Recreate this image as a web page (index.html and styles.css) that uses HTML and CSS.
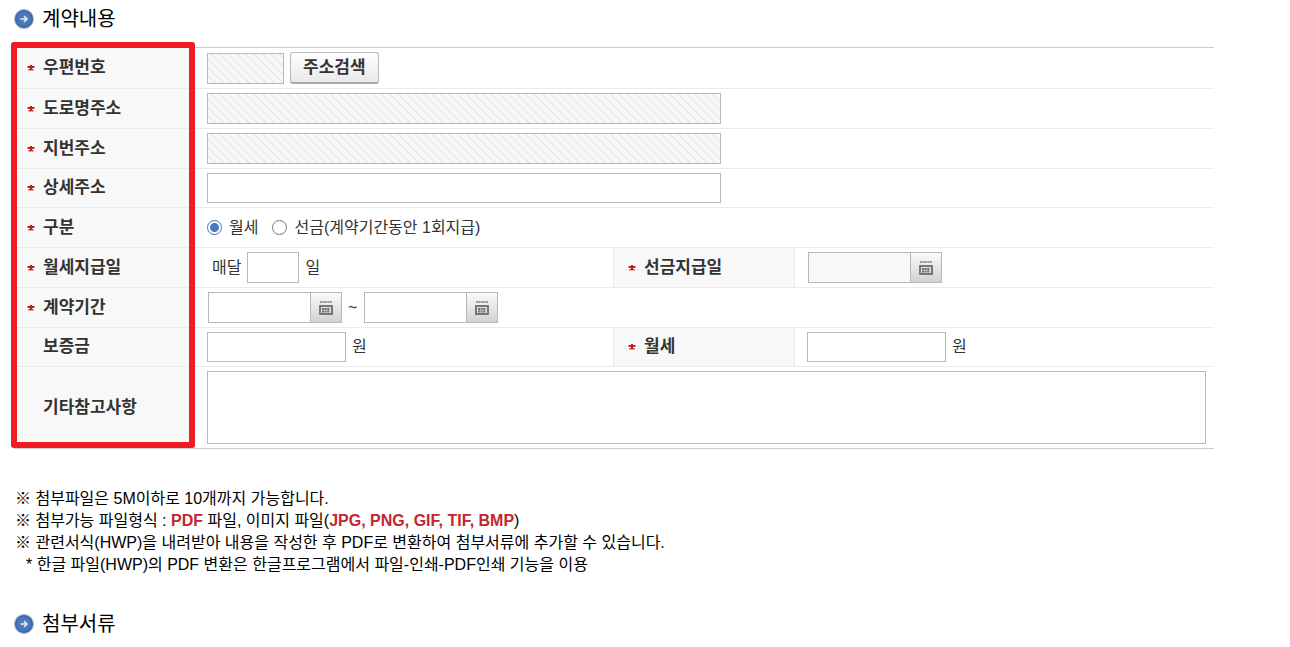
FILE: index.html
```
<!DOCTYPE html>
<html lang="ko">
<head>
<meta charset="utf-8">
<title>계약내용</title>
<link rel="stylesheet" href="styles.css">
</head>
<body>
<svg class="sprite" aria-hidden="true">
  <symbol id="arrow" viewBox="0 0 20 20">
    <circle cx="10" cy="10" r="9.5" fill="#4a78bb" stroke="#a9b9bd"/>
    <circle cx="10" cy="10" r="8" fill="none" stroke="#1f3c94" stroke-dasharray="1 1.2"/>
    <path d="M6.500 10h6M10 7l3 3-3 3" fill="none" stroke="#e8eef5" stroke-width="1.500"/>
  </symbol>
  <symbol id="star" viewBox="0 0 8 6">
    <path d="M0 2h8M1 5h6" stroke="#e3a9a4" stroke-width="2"/>
    <path d="M3 0h2v1h2v2H5v1h1v1H2V4h1V3H1V1h2z" fill="#bf1f1a"/>
  </symbol>
  <symbol id="calendar" viewBox="0 0 14 14">
    <path d="M1 1h12" stroke="#999" stroke-width="2" stroke-dasharray="2 .5"/>
    <path d="M1 5h12v8H1z" fill="#dde3e6" stroke="#777" stroke-width="2"/>
    <path d="M3 8h8M3 10.500h8" stroke="#66717b" stroke-width="2" stroke-dasharray="2 .6"/>
  </symbol>
</svg>
<main class="page">
  <h2 class="heading"><svg class="arrow"><use href="#arrow"/></svg>계약내용</h2>
  <form class="contract">
    <table class="grid">
      <colgroup><col class="col-label"><col class="col-wide"><col class="col-label2"><col></colgroup>
      <tr>
        <th scope="row"><label class="label" for="zip"><svg class="star"><use href="#star"/></svg>우편번호</label></th>
        <td colspan="3"><div class="line"><input class="field zip locked" id="zip" type="text" readonly><button class="search" type="button">주소검색</button></div></td>
      </tr>
      <tr>
        <th scope="row"><label class="label" for="road"><svg class="star"><use href="#star"/></svg>도로명주소</label></th>
        <td colspan="3"><div class="line"><input class="field address locked" id="road" type="text" readonly></div></td>
      </tr>
      <tr>
        <th scope="row"><label class="label" for="lot"><svg class="star"><use href="#star"/></svg>지번주소</label></th>
        <td colspan="3"><div class="line"><input class="field address locked" id="lot" type="text" readonly></div></td>
      </tr>
      <tr>
        <th scope="row"><label class="label" for="detail"><svg class="star"><use href="#star"/></svg>상세주소</label></th>
        <td colspan="3"><div class="line"><input class="field address short" id="detail" type="text"></div></td>
      </tr>
      <tr>
        <th scope="row"><span class="label"><svg class="star"><use href="#star"/></svg>구분</span></th>
        <td colspan="3"><div class="line choices">
          <label class="choice"><input class="radio" type="radio" name="kind" checked>월세</label>
          <label class="choice"><input class="radio" type="radio" name="kind">선금(계약기간동안 1회지급)</label>
        </div></td>
      </tr>
      <tr>
        <th scope="row"><label class="label" for="payday"><svg class="star"><use href="#star"/></svg>월세지급일</label></th>
        <td><div class="line monthly"><span>매달</span><input class="field day" id="payday" type="text"><span>일</span></div></td>
        <th class="inner" scope="row"><label class="label" for="prepay"><svg class="star"><use href="#star"/></svg>선금지급일</label></th>
        <td><div class="line"><span class="date"><input class="field date-text disabled" id="prepay" type="text" readonly><button class="picker" type="button" aria-label="날짜 선택"><svg class="calendar"><use href="#calendar"/></svg></button></span></div></td>
      </tr>
      <tr>
        <th scope="row"><label class="label" for="from"><svg class="star"><use href="#star"/></svg>계약기간</label></th>
        <td colspan="3"><div class="line">
          <span class="date"><input class="field date-text" id="from" type="text"><button class="picker" type="button" aria-label="시작일 선택"><svg class="calendar"><use href="#calendar"/></svg></button></span>
          <span>~</span>
          <span class="date"><input class="field date-text" type="text" aria-label="종료일"><button class="picker" type="button" aria-label="종료일 선택"><svg class="calendar"><use href="#calendar"/></svg></button></span>
        </div></td>
      </tr>
      <tr>
        <th scope="row"><label class="label optional" for="deposit">보증금</label></th>
        <td><div class="line"><input class="field money short" id="deposit" type="text"><span>원</span></div></td>
        <th class="inner" scope="row"><label class="label" for="rent"><svg class="star"><use href="#star"/></svg>월세</label></th>
        <td><div class="line"><input class="field money short" id="rent" type="text"><span>원</span></div></td>
      </tr>
      <tr>
        <th scope="row"><label class="label optional" for="memo">기타참고사항</label></th>
        <td colspan="3"><textarea class="field memo" id="memo"></textarea></td>
      </tr>
    </table>
    <div class="highlight"></div>
  </form>
  <div class="notes">
    <p>※ 첨부파일은 5M이하로 10개까지 가능합니다.</p>
    <p>※ 첨부가능 파일형식 : <strong>PDF</strong> 파일, 이미지 파일(<strong>JPG, PNG, GIF, TIF, BMP</strong>)</p>
    <p>※ 관련서식(HWP)을 내려받아 내용을 작성한 후 PDF로 변환하여 첨부서류에 추가할 수 있습니다.</p>
    <p class="sub">* 한글 파일(HWP)의 PDF 변환은 한글프로그램에서 파일-인쇄-PDF인쇄 기능을 이용</p>
  </div>
  <h2 class="heading"><svg class="arrow"><use href="#arrow"/></svg>첨부서류</h2>
</main>
</body>
</html>
```
FILE: styles.css
```
* { box-sizing: border-box; }
body {
  margin: 0;
  background: #fff;
  color: #333;
  font: 16px/22px "Liberation Sans", "Noto Sans CJK KR", sans-serif;
}
.sprite { position: absolute; width: 0; height: 0; }
.page { padding: 4px 76px 0 14px; }
.heading {
  display: flex;
  align-items: center;
  gap: 8px;
  margin: 0;
  color: #000;
  font-size: 20px;
  font-weight: 400;
  line-height: 30px;
}
.arrow { width: 20px; height: 20px; }
.contract { position: relative; margin: 13px 0 39px; }
.grid {
  width: 100%;
  table-layout: fixed;
  border-collapse: separate;
  border-spacing: 0;
  border-top: 1px solid #ccc;
}
.col-label { width: 181px; }
.col-wide { width: 418px; }
.col-label2 { width: 182px; }
.grid th, .grid td {
  padding: 4px 8px 4px 12px;
  border-bottom: 1px solid #ebebeb;
  vertical-align: middle;
}
.grid th {
  padding-left: 13px;
  background: #f8f8f8;
  text-align: left;
  font-size: 17px;
}
.grid tr:last-child th, .grid tr:last-child td { border-bottom-color: #ccc; }
.grid th.inner { border-left: 1px solid #ebebeb; border-right: 1px solid #ebebeb; padding-left: 14px; }
.label { display: flex; align-items: center; gap: 8px; }
.star { width: 8px; height: 6px; }
.optional { padding-left: 16px; }
.line { display: flex; align-items: center; gap: 6px; min-height: 30px; }
.field {
  display: block;
  height: 31px;
  margin: 0;
  padding: 0 6px;
  border: 1px solid #b8b8b8;
  border-radius: 0;
  background: #fff;
  font: inherit;
}
.short { height: 30px; }
.locked { background: repeating-linear-gradient(45deg, #f8f8f8 0 4px, #e4e4e4 5px, #f8f8f8 6px); }
.disabled { background: #f8f8f8; }
.zip { width: 77px; }
.address { width: 514px; }
.day { width: 52px; }
.money { width: 139px; }
.memo { width: 100%; height: 73px; resize: none; }
.search {
  height: 32px;
  padding: 0 12px;
  border: 1px solid #b8b8b8;
  border-bottom: 2px solid #aaa;
  border-radius: 3px;
  background: linear-gradient(#fff, #e9e9e9);
  color: #333;
  font: bold 17px/22px "Liberation Sans", "Noto Sans CJK KR", sans-serif;
}
.choices { min-height: 31px; gap: 14px; }
.choice { display: flex; align-items: center; gap: 7px; }
.radio {
  appearance: none;
  width: 15px;
  height: 15px;
  margin: 0;
  border: 1px solid #767676;
  border-radius: 50%;
  background: #fff;
}
.radio:checked { border-color: #3f74b5; background: radial-gradient(circle, #4a78bb 0 4px, #fff 5px); }
.monthly { padding-left: 5px; }
.date { display: flex; padding-left: 1px; }
.date-text { width: 102px; border-right: 0; }
.picker {
  display: flex;
  align-items: center;
  justify-content: center;
  width: 32px;
  height: 31px;
  padding: 0;
  border: 1px solid #b8b8b8;
  background: linear-gradient(#fafafa, #d2d2d2);
}
.calendar { width: 14px; height: 14px; }
.highlight {
  position: absolute;
  top: -5px;
  bottom: 1px;
  left: -3px;
  width: 184px;
  border: 6px solid #ee1c25;
  border-radius: 3px;
  pointer-events: none;
}
.notes { margin-bottom: 33px; padding-left: 1px; color: #000; }
.notes p { margin: 0; }
.notes .sub { padding-left: 11px; }
.notes strong { color: #c1272d; }
```
